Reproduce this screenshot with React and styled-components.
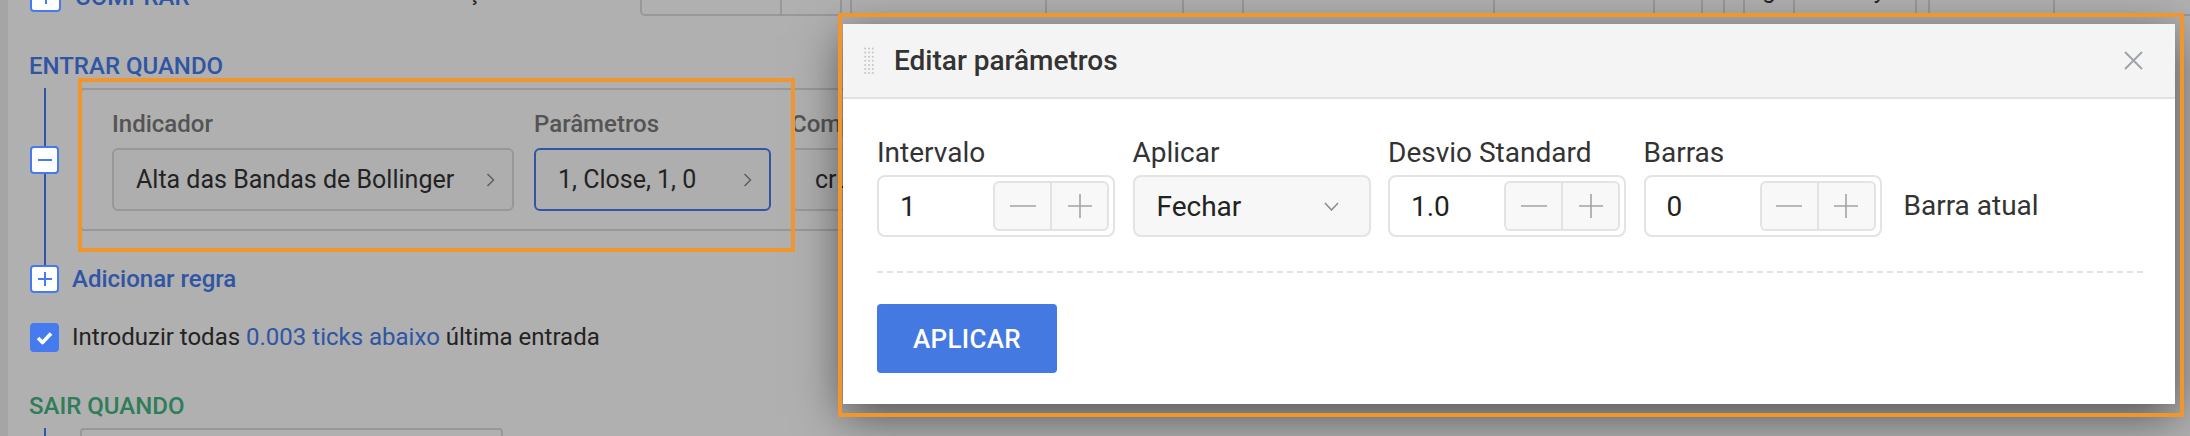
import React from "react";
import styled, { createGlobalStyle } from "styled-components";

const BLUE = "#457bef";
const GREEN = "#44b581";
const ORANGE = "#f1962f";

const GlobalStyle = createGlobalStyle`
  html, body {
    margin: 0;
    padding: 0;
    background: #fff;
  }
  body {
    font-family: Roboto, "Noto Sans", Arial, sans-serif;
    overflow: hidden;
  }
  * {
    box-sizing: border-box;
  }
`;

const Screen = styled.div`
  position: relative;
  width: 2190px;
  height: 436px;
  overflow: hidden;
  display: flex;
  background: #fff;
`;

const SideStrip = styled.div`
  flex: none;
  width: 8px;
  background: #efefef;
`;

const Builder = styled.div`
  flex: 1;
  min-width: 0;
  padding-left: 22px;
  display: flex;
  flex-direction: column;
`;

/* ---------- top row (scrolled half out of view) ---------- */

const TopRow = styled.div`
  flex: none;
  height: 46px;
  margin-top: -30px;
  display: flex;
  align-items: flex-end;
`;

const LeftZone = styled.div`
  flex: none;
  width: 610px;
  display: flex;
  align-items: flex-end;
`;

const SideAction = styled.div`
  flex: none;
  width: 422px;
  margin-bottom: 4px;
  display: flex;
  align-items: center;
  gap: 14px;
  color: ${BLUE};
  font-size: 24px;
  font-weight: 500;
  line-height: 28px;
`;

const Caption = styled.span`
  margin-bottom: 10px;
  font-size: 24px;
  line-height: 28px;
  color: #333;
`;

const CellGroup = styled.div`
  flex: none;
  display: flex;
  height: 40px;
  margin-left: ${(p) => p.$offset || 0}px;
  border: 2px solid #dcdcdc;
  border-top: none;
  border-radius: 0 0 5px 5px;
`;

const Cell = styled.div`
  flex: none;
  width: ${(p) => p.$w}px;
  display: flex;
  justify-content: ${(p) => p.$align || "center"};
  padding-right: ${(p) => p.$pr || 0}px;
  font-size: 24px;
  line-height: 28px;
  color: #333;
  & + & {
    border-left: 2px solid #dcdcdc;
  }
`;

/* ---------- rules ---------- */

const SectionTitle = styled.div`
  margin-top: ${(p) => p.$gap}px;
  margin-left: -1px;
  font-size: 24px;
  font-weight: 500;
  line-height: 28px;
  color: ${(p) => (p.$tone === "exit" ? GREEN : BLUE)};
`;

const RuleBlock = styled.div`
  position: relative;
  margin-top: 8px;
  padding-bottom: ${(p) => p.$tail || 0}px;
  display: flex;
  align-items: center;
  gap: 21px;
  &::before {
    content: "";
    position: absolute;
    left: 13.5px;
    top: 0;
    bottom: 0;
    width: 2px;
    background: ${BLUE};
  }
`;

const SquareBox = styled.div`
  position: relative;
  z-index: 1;
  flex: none;
  width: ${(p) => p.$size || 29}px;
  height: ${(p) => p.$size || 28}px;
  display: grid;
  place-items: center;
  border: 2px solid ${BLUE};
  border-radius: 4px;
  background: ${(p) => (p.$filled ? BLUE : "#fff")};
  color: ${(p) => (p.$filled ? "#fff" : BLUE)};
`;

const RuleCard = styled.div`
  flex: none;
  width: ${(p) => p.$w}px;
  min-height: ${(p) => p.$minH || 0}px;
  margin-left: ${(p) => p.$indent || 0}px;
  display: flex;
  gap: 20px;
  padding: 20px 0 18px 30px;
  border: 2px solid #dcdcdc;
  border-radius: 4px;
  background: #fff;
`;

const Column = styled.div`
  display: flex;
  flex-direction: column;
  gap: 10px;
`;

const ColumnLabel = styled.div`
  font-size: 24px;
  font-weight: 500;
  line-height: 28px;
  color: #7a7a7a;
`;

const Picker = styled.div`
  width: ${(p) => p.$w}px;
  height: 63px;
  display: flex;
  align-items: center;
  justify-content: space-between;
  padding: 0 17px 0 22px;
  border: 2px solid ${(p) => (p.$active ? BLUE : "#dcdcdc")};
  border-radius: 6px;
  background: #fdfdfd;
  font-size: 25px;
  color: #333;
  white-space: nowrap;
`;

const AddRule = styled.div`
  display: flex;
  align-items: center;
  gap: 13px;
  height: 28px;
  font-size: 24px;
  font-weight: 500;
  color: ${BLUE};
`;

const CheckRow = styled.div`
  margin-top: 30px;
  display: flex;
  align-items: center;
  gap: 13px;
  font-size: 24px;
  line-height: 29px;
  color: #333;
`;

const Accent = styled.span`
  color: ${BLUE};
`;

/* ---------- overlay & modal ---------- */

const Backdrop = styled.div`
  position: absolute;
  inset: 0;
  background: rgba(0, 0, 0, 0.31);
`;

const Annotation = styled.div`
  position: absolute;
  z-index: 3;
  left: ${(p) => p.$x}px;
  top: ${(p) => p.$y}px;
  width: ${(p) => p.$w}px;
  height: ${(p) => p.$h}px;
  border: 4px solid ${ORANGE};
  pointer-events: none;
`;

const Modal = styled.div`
  position: absolute;
  z-index: 2;
  left: 843px;
  top: 24px;
  width: 1332px;
  background: #fff;
  box-shadow: 0 12px 44px rgba(0, 0, 0, 0.55);
`;

const ModalHeader = styled.div`
  height: 75px;
  display: flex;
  align-items: center;
  gap: 20px;
  padding: 0 32px 0 21px;
  background: #f4f4f4;
  border-bottom: 2px solid #e2e2e2;
`;

const ModalTitle = styled.div`
  flex: 1;
  font-size: 28px;
  font-weight: 500;
  color: #333;
`;

const ModalBody = styled.div`
  padding: 38px 32px 31px 34px;
`;

const ParamRow = styled.div`
  display: flex;
  align-items: flex-end;
  gap: 17.5px;
`;

const FieldGroup = styled.div`
  width: 238px;
  display: flex;
  flex-direction: column;
  gap: 6px;
`;

const FieldLabel = styled.div`
  font-size: 28px;
  line-height: 32px;
  color: #333;
  white-space: nowrap;
`;

const Control = styled.div`
  height: 62px;
  display: flex;
  align-items: center;
  justify-content: space-between;
  padding: ${(p) => (p.$select ? "0 30px 0 22px" : "0 4px 0 21px")};
  border: 2px solid #e3e3e3;
  border-radius: 8px;
  background: ${(p) => (p.$select ? "#f7f7f7" : "#fff")};
  font-size: 28px;
  color: #222;
`;

const Stepper = styled.div`
  width: 116px;
  height: 50px;
  display: flex;
  border: 2px solid #e3e3e3;
  border-radius: 6px;
  background: #f8f8f8;
  overflow: hidden;
`;

const StepButton = styled.div`
  flex: 1;
  display: grid;
  place-items: center;
  & + & {
    border-left: 2px solid #e3e3e3;
  }
`;

const SideNote = styled.div`
  margin-left: 4.5px;
  height: 62px;
  line-height: 62px;
  font-size: 28px;
  color: #333;
`;

const Divider = styled.div`
  margin: 34px 0 31px;
  border-top: 2px dashed #e2e2e2;
`;

const ApplyButton = styled.button`
  display: block;
  width: 180px;
  height: 69px;
  padding: 0;
  border: none;
  border-radius: 4px;
  background: #4479e1;
  color: #fff;
  font-family: inherit;
  font-size: 26px;
  font-weight: 500;
  letter-spacing: 0.3px;
`;

/* ---------- icons ---------- */

const PlusGlyph = ({ size = 14 }) => (
  <svg width={size} height={size} viewBox="0 0 14 14">
    <path d="M7 0v14M0 7h14" stroke="currentColor" strokeWidth="2" fill="none" />
  </svg>
);

const MinusGlyph = () => (
  <svg width="14" height="2" viewBox="0 0 14 2">
    <path d="M0 1h14" stroke="currentColor" strokeWidth="2" />
  </svg>
);

const CheckGlyph = () => (
  <svg width="17" height="14" viewBox="0 0 17 14">
    <path d="M2 7l4.5 4.5L15 2.5" stroke="#fff" strokeWidth="3.6" fill="none" strokeLinejoin="round" />
  </svg>
);

const ChevronRight = () => (
  <svg width="9" height="14" viewBox="0 0 9 14">
    <path d="M1.5 1l6 6-6 6" stroke="#8a8a8a" strokeWidth="1.5" fill="none" />
  </svg>
);

const ChevronDown = () => (
  <svg width="15" height="9" viewBox="0 0 15 9">
    <path d="M1 1l6.5 7L14 1" stroke="#8a8a8a" strokeWidth="1.5" fill="none" />
  </svg>
);

const StepMinus = () => (
  <svg width="26" height="2" viewBox="0 0 26 2">
    <path d="M0 1h26" stroke="#a3a3a3" strokeWidth="1.6" />
  </svg>
);

const StepPlus = () => (
  <svg width="24" height="24" viewBox="0 0 24 24">
    <path d="M12 0v24M0 12h24" stroke="#a3a3a3" strokeWidth="1.6" fill="none" />
  </svg>
);

const Grip = () => (
  <svg width="10" height="28" viewBox="0 0 10 28">
    {[0, 1, 2, 3, 4, 5, 6].map((r) =>
      [1.2, 5, 8.8].map((cx) => (
        <circle key={`${r}-${cx}`} cx={cx} cy={1.5 + r * 4.1} r="1" fill="#c6c6c6" />
      ))
    )}
  </svg>
);

const CloseGlyph = () => (
  <svg width="19" height="19" viewBox="0 0 19 19">
    <path d="M1 1l17 17M18 1L1 18" stroke="#9ea4ab" strokeWidth="2" fill="none" />
  </svg>
);

/* ---------- parts ---------- */

const NumberField = ({ label, value }) => (
  <FieldGroup>
    <FieldLabel>{label}</FieldLabel>
    <Control>
      <span>{value}</span>
      <Stepper>
        <StepButton>
          <StepMinus />
        </StepButton>
        <StepButton>
          <StepPlus />
        </StepButton>
      </Stepper>
    </Control>
  </FieldGroup>
);

const topCells1 = [138, 60];
const topCells2 = [193, 137, 60, 251, 160, 48, 22, 20, { w: 50, t: "g" }, { w: 122, t: "y", align: "flex-end", pr: 30 }];
const topCells3 = [123, 220];

const renderCells = (cells) =>
  cells.map((c, i) =>
    typeof c === "number" ? (
      <Cell key={i} $w={c} />
    ) : (
      <Cell key={i} $w={c.w} $align={c.align} $pr={c.pr}>
        {c.t}
      </Cell>
    )
  );

export default function App() {
  return (
    <Screen>
      <GlobalStyle />
      <SideStrip />
      <Builder>
        <TopRow>
          <LeftZone>
            <SideAction>
              <SquareBox $size={31}>
                <PlusGlyph />
              </SquareBox>
              COMPRAR
            </SideAction>
            <Caption>Ação</Caption>
          </LeftZone>
          <CellGroup>{renderCells(topCells1)}</CellGroup>
          <CellGroup $offset={8}>{renderCells(topCells2)}</CellGroup>
          <CellGroup $offset={11}>{renderCells(topCells3)}</CellGroup>
        </TopRow>

        <SectionTitle $gap={36}>ENTRAR QUANDO</SectionTitle>
        <RuleBlock $tail={34}>
          <SquareBox>
            <MinusGlyph />
          </SquareBox>
          <RuleCard $w={1400}>
            <Column>
              <ColumnLabel>Indicador</ColumnLabel>
              <Picker $w={402}>
                Alta das Bandas de Bollinger
                <ChevronRight />
              </Picker>
            </Column>
            <Column>
              <ColumnLabel>Parâmetros</ColumnLabel>
              <Picker $w={237} $active>
                1, Close, 1, 0
                <ChevronRight />
              </Picker>
            </Column>
            <Column>
              <ColumnLabel>Comparação</ColumnLabel>
              <Picker $w={260}>
                cruza acima
                <ChevronRight />
              </Picker>
            </Column>
          </RuleCard>
        </RuleBlock>
        <AddRule>
          <SquareBox>
            <PlusGlyph />
          </SquareBox>
          Adicionar regra
        </AddRule>
        <CheckRow>
          <SquareBox $size={29} $filled>
            <CheckGlyph />
          </SquareBox>
          <span>
            Introduzir todas <Accent>0.003 ticks abaixo</Accent> última entrada
          </span>
        </CheckRow>

        <SectionTitle $gap={40} $tone="exit">
          SAIR QUANDO
        </SectionTitle>
        <RuleBlock>
          <RuleCard $w={423} $minH={80} $indent={50} />
        </RuleBlock>
      </Builder>

      <Backdrop />

      <Modal>
        <ModalHeader>
          <Grip />
          <ModalTitle>Editar parâmetros</ModalTitle>
          <CloseGlyph />
        </ModalHeader>
        <ModalBody>
          <ParamRow>
            <NumberField label="Intervalo" value="1" />
            <FieldGroup>
              <FieldLabel>Aplicar</FieldLabel>
              <Control $select>
                <span>Fechar</span>
                <ChevronDown />
              </Control>
            </FieldGroup>
            <NumberField label="Desvio Standard" value="1.0" />
            <NumberField label="Barras" value="0" />
            <SideNote>Barra atual</SideNote>
          </ParamRow>
          <Divider />
          <ApplyButton>APLICAR</ApplyButton>
        </ModalBody>
      </Modal>

      <Annotation $x={78} $y={78} $w={717} $h={174} />
      <Annotation $x={838} $y={13} $w={1346} $h={404} />
    </Screen>
  );
}
